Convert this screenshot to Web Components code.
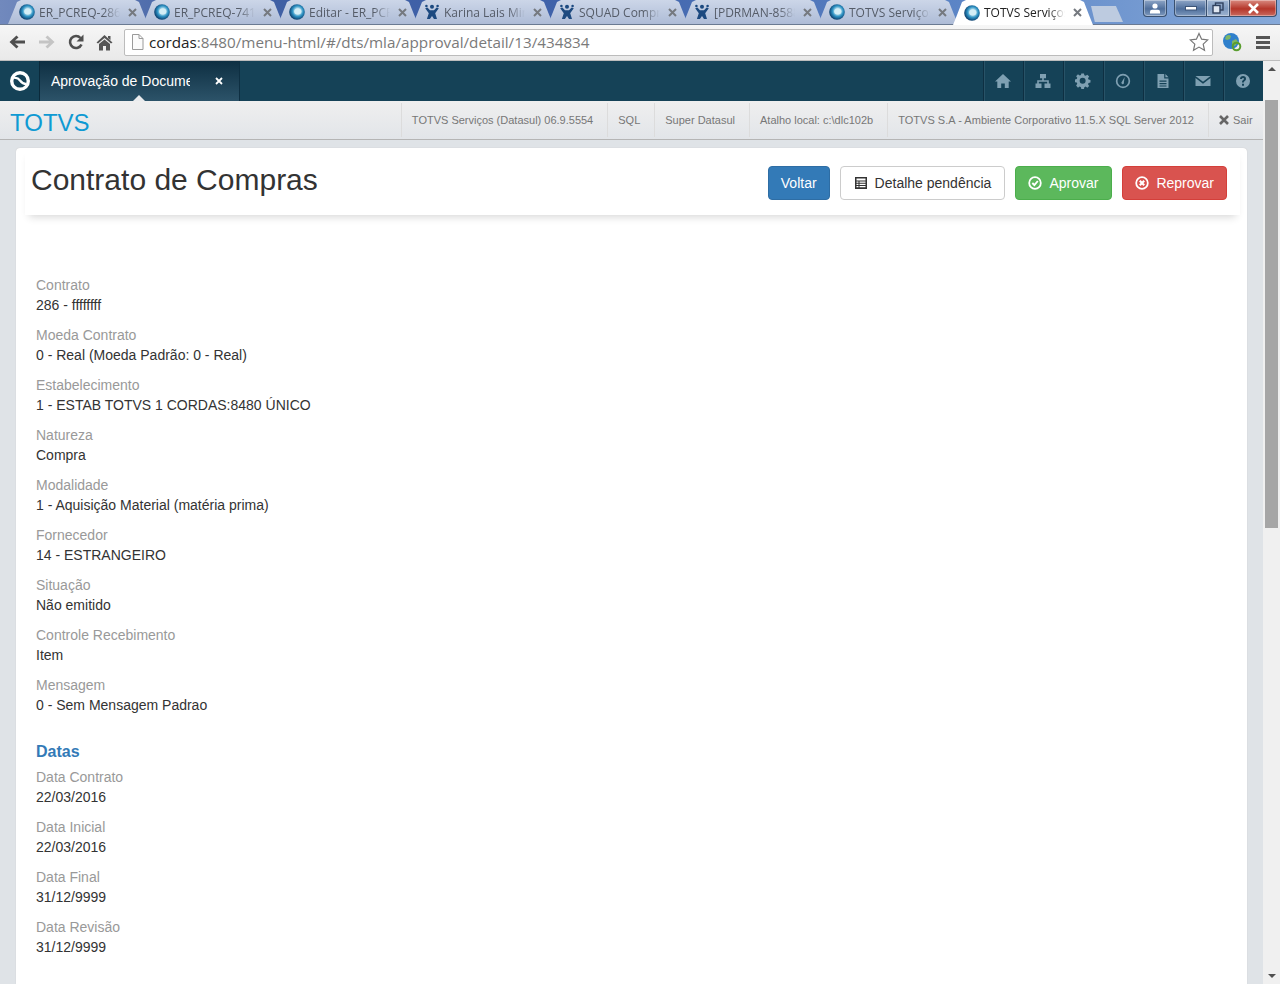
<!DOCTYPE html>
<html lang="pt-BR">
<head>
<meta charset="utf-8">
<title>TOTVS Serviços</title>
<style>
  html, body { margin: 0; height: 984px; overflow: hidden; background: #dfe3e7; }
  body { display: flex; flex-direction: column; font-family: "Liberation Sans", Arial, sans-serif; font-size: 14px; color: #333; }
  .view { display: flex; flex: 1; min-height: 0; }
  .main { flex: 1; min-width: 0; display: flex; flex-direction: column; }
</style>
</head>
<body>
<tab-strip>
  <chrome-tab icon="totvs">ER_PCREQ-286</chrome-tab>
  <chrome-tab icon="totvs">ER_PCREQ-741</chrome-tab>
  <chrome-tab icon="totvs">Editar - ER_PCREQ</chrome-tab>
  <chrome-tab icon="jira">Karina Lais Mira</chrome-tab>
  <chrome-tab icon="jira">SQUAD Compras</chrome-tab>
  <chrome-tab icon="jira">[PDRMAN-8588]</chrome-tab>
  <chrome-tab icon="totvs">TOTVS Serviços</chrome-tab>
  <chrome-tab icon="totvs" active>TOTVS Serviços</chrome-tab>
</tab-strip>
<browser-toolbar host="cordas" rest=":8480/menu-html/#/dts/mla/approval/detail/13/434834"></browser-toolbar>
<div class="view">
  <div class="main">
    <app-nav title-text="Aprovação de Documentos"></app-nav>
    <info-bar>
      <info-item>TOTVS Serviços (Datasul) 06.9.5554</info-item>
      <info-item>SQL</info-item>
      <info-item>Super Datasul</info-item>
      <info-item>Atalho local: c:\dlc102b</info-item>
      <info-item wide>TOTVS S.A - Ambiente Corporativo 11.5.X SQL Server 2012</info-item>
    </info-bar>
    <page-card heading="Contrato de Compras">
      <action-button slot="actions" kind="primary">Voltar</action-button>
      <action-button slot="actions" icon="list">Detalhe pendência</action-button>
      <action-button slot="actions" kind="success" icon="check">Aprovar</action-button>
      <action-button slot="actions" kind="danger" icon="times">Reprovar</action-button>

      <field-item label="Contrato">286 - ffffffff</field-item>
      <field-item label="Moeda Contrato">0 - Real (Moeda Padrão: 0 - Real)</field-item>
      <field-item label="Estabelecimento">1 - ESTAB TOTVS 1 CORDAS:8480 ÚNICO</field-item>
      <field-item label="Natureza">Compra</field-item>
      <field-item label="Modalidade">1 - Aquisição Material (matéria prima)</field-item>
      <field-item label="Fornecedor">14 - ESTRANGEIRO</field-item>
      <field-item label="Situação">Não emitido</field-item>
      <field-item label="Controle Recebimento">Item</field-item>
      <field-item label="Mensagem">0 - Sem Mensagem Padrao</field-item>

      <section-title>Datas</section-title>
      <field-item label="Data Contrato">22/03/2016</field-item>
      <field-item label="Data Inicial">22/03/2016</field-item>
      <field-item label="Data Final">31/12/9999</field-item>
      <field-item label="Data Revisão">31/12/9999</field-item>
    </page-card>
  </div>
  <page-scrollbar></page-scrollbar>
</div>

<script>
const TOTVS_ICON = `
  <svg width="16" height="16" viewBox="0 0 16 16">
    <defs>
      <radialGradient id="g" cx="55%" cy="45%" r="55%">
        <stop offset="30%" stop-color="#bfe4f0"/><stop offset="62%" stop-color="#2f93c4"/><stop offset="100%" stop-color="#0b3f6e"/>
      </radialGradient>
    </defs>
    <circle cx="8" cy="8" r="7.8" fill="url(#g)"/>
    <ellipse cx="8.8" cy="7.400" rx="3.600" ry="3" fill="#d4eef6"/>
  </svg>`;

const JIRA_ICON = `
  <svg width="16" height="16" viewBox="0 0 16 16" fill="#1d4a80">
    <circle cx="8" cy="2.800" r="2"/>
    <circle cx="2.400" cy="2" r="1.300"/>
    <circle cx="13.600" cy="2" r="1.300"/>
    <path d="M1.200 4.200 3.400 3.600 6 6.200h4l2.600-2.600 2.200.6-3.600 5 1.800 5.800h-3L8 12 5.900 15H2.900L4.800 9.200z"/>
  </svg>`;

class TabStrip extends HTMLElement {
  constructor() {
    super();
    this.attachShadow({mode: 'open'}).innerHTML = `
      <style>
        :host {
          display: flex; height: 25px; box-sizing: border-box; padding-left: 8px; flex: none;
          background: linear-gradient(90deg, #7189bd 0, #3f5fa3 18%, #3f62aa 45%, #5c85c6 75%, #86a9d9 100%);
          border-bottom: 1px solid #6a7a92; position: relative; z-index: 2;
        }
        .tabs { display: flex; }
        .new-tab {
          width: 32px; height: 16px; margin: 6px 0 0 3px; background: #bdcbe0; align-self: flex-start;
          clip-path: polygon(0 0, 78% 0, 100% 100%, 12% 100%);
        }
        .win { margin-left: auto; display: flex; align-items: flex-start; padding-right: 3px; }
        .btn {
          height: 17px; box-sizing: border-box; border: 1px solid #39506f; border-top: 0; border-radius: 0 0 4px 4px;
          display: flex; align-items: center; justify-content: center;
          background: linear-gradient(#8fa6c7, #4f6f9c 55%, #7d98bd); box-shadow: inset 0 0 0 1px rgba(255,255,255,.35);
        }
        .user { width: 24px; margin-right: 7px; }
        .group { display: flex; }
        .min { width: 32px; border-radius: 0 0 0 4px; border-right: 0; }
        .max { width: 23px; border-radius: 0; border-right: 0; background: linear-gradient(#a3b8d3, #7e9abf 55%, #9db3cf); }
        .close { width: 48px; border-radius: 0 0 4px 0; background: linear-gradient(#d98a80, #b5362a 55%, #c96a5f); }
      </style>
      <div class="tabs"><slot></slot></div>
      <div class="new-tab"></div>
      <div class="win">
        <div class="btn user">
          <svg width="12" height="11" viewBox="0 0 12 11" fill="#fff"><circle cx="6" cy="3" r="2.600"/><path d="M1 10.500V8.500Q1 7 3 6.800h6q2 .2 2 1.700v2z"/></svg>
        </div>
        <div class="group">
          <div class="btn min"><svg width="12" height="5" viewBox="0 0 12 5"><rect x=".5" y=".5" width="11" height="3.500" fill="#fff" stroke="#3d5578"/></svg></div>
          <div class="btn max"><svg width="12" height="12" viewBox="0 0 12 12" fill="none" stroke="#2f415e" stroke-width="1.400"><rect x="3.500" y="1" width="7.500" height="7"/><rect x="1" y="3.500" width="7" height="7.500" fill="#dfe7f1"/></svg></div>
          <div class="btn close"><svg width="13" height="11" viewBox="0 0 13 11" stroke="#fff" stroke-width="2.600"><path d="M2 1l9 9M11 1l-9 9"/></svg></div>
        </div>
      </div>`;
  }
}

class ChromeTab extends HTMLElement {
  connectedCallback() {
    const icon = this.getAttribute('icon') === 'jira' ? JIRA_ICON : TOTVS_ICON;
    this.attachShadow({mode: 'open'}).innerHTML = `
      <style>
        :host {
          display: flex; align-items: center; box-sizing: border-box; width: 141px; height: 24px; margin-right: -6px;
          padding: 0 11px 0 11px; font: 12px "Open Sans", "Liberation Sans", sans-serif; color: #555c68; position: relative;
          background: linear-gradient(#ccd6e8, #aebcd7);
          clip-path: polygon(0 100%, 4px 60%, 9px 8%, 13px 0, 127px 0, 131px 8%, 136px 60%, 140px 100%);
        }
        :host([active]) { background: #fff; color: #222; height: 25px; z-index: 1; }
        .icon { width: 16px; height: 16px; flex: none; margin-right: 4px; }
        .title {
          flex: 1; min-width: 0; white-space: nowrap; overflow: hidden;
          -webkit-mask-image: linear-gradient(90deg, #000 80%, transparent 100%);
        }
        .x { flex: none; margin: 0 1px 0 8px; }
      </style>
      <span class="icon">${icon}</span>
      <span class="title"><slot></slot></span>
      <svg class="x" width="9" height="9" viewBox="0 0 9 9" stroke="#75797f" stroke-width="2"><path d="M1 1l7 7M8 1l-7 7"/></svg>`;
  }
}

class BrowserToolbar extends HTMLElement {
  connectedCallback() {
    this.attachShadow({mode: 'open'}).innerHTML = `
      <style>
        :host {
          display: flex; align-items: center; height: 36px; flex: none; box-sizing: border-box; padding: 0 0 1px 7px;
          background: linear-gradient(#f6f6f6, #e9e9e9); border-bottom: 1px solid #bdbdbd;
        }
        svg { display: block; flex: none; }
        .nav { display: flex; align-items: center; gap: 10px; width: 117px; }
        .home { margin-left: 1px; }
        .omni {
          width: 1089px; height: 27px; box-sizing: border-box; background: #fff; border: 1px solid #bcbcbc; border-radius: 2px;
          display: flex; align-items: center; padding: 0 3px 0 6px;
          font: 15.25px "Open Sans", "Liberation Sans", sans-serif; color: #7a7a7a;
        }
        .omni b { font-weight: normal; color: #222; }
        .url { flex: 1; margin-left: 5px; white-space: nowrap; }
        .ext { margin-left: 9px; }
        .menu { margin-left: 14px; }
      </style>
      <div class="nav">
        <svg width="20" height="20" viewBox="0 0 20 20" fill="#4f4f4f"><path d="M2.500 10 9.500 3.500 11.500 5.500 8 8.500h10v3H8l3.500 3-2 2z"/></svg>
        <svg width="20" height="20" viewBox="0 0 20 20" fill="#c4c4c4"><path d="M17.500 10 10.500 3.500 8.500 5.500 12 8.500H2v3h10l-3.500 3 2 2z"/></svg>
        <svg width="18" height="18" viewBox="0 0 18 18" fill="none" stroke="#4f4f4f" stroke-width="2.600"><path d="M14.500 11.500A6 6 0 1 1 13.500 5"/><path d="M16.500 1.500v7h-7z" fill="#4f4f4f" stroke="none"/></svg>
        <svg class="home" width="17" height="17" viewBox="0 0 17 17" fill="#555"><path d="M8.500 1 16.500 8.500 15 9.500 8.500 4 2 9.500.500 8.500zM3 10l5.500-4.600L14 10v6.500h-4V12H7v4.500H3zM12 2h2.500v4L12 4z"/></svg>
      </div>
      <div class="omni">
        <svg width="13" height="16" viewBox="0 0 13 16" fill="#fbfbfb" stroke="#9a9a9a"><path d="M1.500.500h6.500l4 4v11h-10.500zM8 .500v4h4" /></svg>
        <span class="url"><b>${this.getAttribute('host')}</b>${this.getAttribute('rest')}</span>
        <svg width="20" height="20" viewBox="0 0 20 20" fill="#fff" stroke="#777" stroke-width="1.200"><path d="M10 1.500l2.600 5.700 6.200.700-4.600 4.200 1.300 6.100L10 15.100l-5.500 3.100 1.300-6.100L1.200 7.900l6.200-.7z"/></svg>
      </div>
      <svg class="ext" width="20" height="20" viewBox="0 0 20 20">
        <circle cx="9" cy="9" r="8" fill="#2f80cc"/>
        <path d="M4 4q3-2 5 0l-1 3-3 1-2-1zM10 9l4-2 2 3-3 4-3-1z" fill="#7db665"/>
        <circle cx="14.500" cy="14.500" r="3.800" fill="none" stroke="#5a9e2f" stroke-width="2"/>
      </svg>
      <svg class="menu" width="14" height="13" viewBox="0 0 14 13" fill="#555"><rect width="14" height="3"/><rect y="5" width="14" height="3"/><rect y="10" width="14" height="3"/></svg>`;
  }
}

class AppNav extends HTMLElement {
  connectedCallback() {
    const icons = [
      '<path d="M8 1 16 8.500h-2.300V15H9.800v-4.500H6.200V15H2.300V8.500H0z"/>',
      '<path d="M5 1h6v4.300H8.800v1.900h5V10.500h1.700V15h-6v-4.500h2.700V8.800H3.800v1.700h2.700V15h-6v-4.500h1.700V7.200h5V5.300H5z"/>',
      '<path fill-rule="evenodd" d="M6.500 0h3l.4 2.200 1.500.6 1.900-1.300 2.100 2.100-1.300 1.900.6 1.500 2.200.4v3l-2.200.4-.6 1.500 1.300 1.900-2.100 2.100-1.900-1.300-1.500.6-.4 2.200h-3l-.4-2.200-1.500-.6-1.900 1.300L.6 13.700l1.300-1.900-.6-1.500-2.200-.4v-3l2.200-.4.6-1.500L.6 3.100 2.700 1l1.900 1.300 1.500-.6zM8 5a3.400 3.400 0 1 0 0 6.800A3.400 3.400 0 0 0 8 5z" transform="translate(.6 .4) scale(.88)"/>',
      '<path fill-rule="evenodd" d="M8 .800a7.200 7.200 0 1 0 0 14.400A7.200 7.200 0 0 0 8 .800zm0 1.700a5.500 5.500 0 1 1 0 11 5.500 5.500 0 0 1 0-11z"/><path d="M9.700 3.900 8.900 9.300a1.300 1.300 0 1 1-2-.5z"/>',
      '<path fill-rule="evenodd" d="M2.500 1h6.700v4.500H13.500V15h-11zM4.500 7.500v1.200h7V7.500zm0 2.600v1.200h7v-1.200zm0 2.400v1h7v-1zM10.400 1l3.100 3.300h-3.100z"/>',
      '<path d="M.500 3h15L8 8.800zM.500 5.100V13h15V5.100L8 10.800z"/>',
      '<path fill-rule="evenodd" d="M8 1a7 7 0 1 0 0 14A7 7 0 0 0 8 1zM7 10.800h2v2H7zM5 6c0-1.900 1.300-3 3.100-3S11 4 11 5.700c0 1.400-.8 2-1.500 2.500-.5.4-.6.600-.6 1.300H7c0-1.300.3-1.900 1.100-2.500.6-.4.900-.7.900-1.200s-.3-.9-.9-.9c-.7 0-1 .4-1.100 1.100z"/>'
    ];
    this.attachShadow({mode: 'open'}).innerHTML = `
      <style>
        :host { display: flex; height: 40px; flex: none; background: #154257; }
        .logo { width: 40px; display: flex; align-items: center; justify-content: center; border-right: 1px solid #0b2a3b; box-sizing: border-box; }
        .tab {
          width: 200px; box-sizing: border-box; display: flex; align-items: center; padding-left: 11px; position: relative; color: #fff;
          background: linear-gradient(#0e2f42, #2c5369); border-right: 1px solid #0e2f42;
        }
        .tab span { width: 139px; overflow: hidden; white-space: nowrap; }
        .tab svg { margin-left: 25px; }
        .tab::after {
          content: ""; position: absolute; left: 93px; bottom: 0; border: 6px solid transparent; border-top: 0; border-bottom-color: #e9ebed;
        }
        .icons { margin-left: auto; display: flex; }
        .cell {
          width: 40px; box-sizing: border-box; display: flex; align-items: center; justify-content: center; padding-right: 1px;
          border-left: 1px solid #0e2f42; box-shadow: inset 1px 0 0 #285367;
        }
        .cell svg { fill: #7fa0b2; display: block; }
      </style>
      <div class="logo">
        <svg width="22" height="22" viewBox="0 0 22 22" fill="none" stroke="#fff"><circle cx="11" cy="11" r="8.300" stroke-width="3.400"/><path d="M5 8Q8.500 7 11 10.500T17.500 14" stroke-width="2.200"/></svg>
      </div>
      <div class="tab">
        <span>${this.getAttribute('title-text')}</span>
        <svg width="8" height="8" viewBox="0 0 8 8" stroke="#fff" stroke-width="1.800"><path d="M1 1l6 6M7 1l-6 6"/></svg>
      </div>
      <div class="icons">
        ${icons.map(p => `<div class="cell"><svg width="16" height="16" viewBox="0 0 16 16">${p}</svg></div>`).join('')}
      </div>`;
  }
}

class InfoBar extends HTMLElement {
  constructor() {
    super();
    this.attachShadow({mode: 'open'}).innerHTML = `
      <style>
        :host {
          display: flex; height: 39px; flex: none; box-sizing: border-box; padding: 2px 0 0 10px;
          background: linear-gradient(#efefef, #e2e5e9); border-bottom: 1px solid #b5b5b5;
        }
        .brand { font-size: 24px; line-height: 39px; color: #0f9ad3; }
        .items { margin-left: auto; display: flex; height: 34px; }
        .out {
          display: flex; align-items: center; gap: 4px; width: 55px; height: 34px; box-sizing: border-box; padding-left: 10px;
          border-left: 1px solid #dcdcdc; font-size: 11px; color: #777;
        }
      </style>
      <div class="brand">TOTVS</div>
      <div class="items"><slot></slot></div>
      <div class="out">
        <svg width="10" height="10" viewBox="0 0 10 10" stroke="#666" stroke-width="2.600"><path d="M1 1l8 8M9 1l-8 8"/></svg>Sair
      </div>`;
  }
}

class InfoItem extends HTMLElement {
  constructor() {
    super();
    this.attachShadow({mode: 'open'}).innerHTML = `
      <style>
        :host {
          display: flex; align-items: center; padding: 0 14px 0 10px; border-left: 1px solid #dcdcdc;
          font-size: 11px; color: #777; white-space: nowrap;
        }
        :host([wide]) { letter-spacing: .036px; }
      </style>
      <slot></slot>`;
  }
}

class PageCard extends HTMLElement {
  connectedCallback() {
    this.attachShadow({mode: 'open'}).innerHTML = `
      <style>
        :host {
          display: block; flex: 1; min-height: 0; margin: 8px 16px 0 16px; background: #fff;
          border-radius: 4px 4px 0 0; box-shadow: 0 0 1px #bbb; overflow: hidden;
        }
        header {
          display: flex; justify-content: space-between; height: 67px; box-sizing: border-box; padding: 18px 13px 0 6px;
          margin-left: 9px; margin-right: 7px;
          box-shadow: 0 6px 8px -4px rgba(0, 0, 0, .16);
        }
        h1 { margin: -4px 0 0; font-size: 30px; font-weight: normal; line-height: 35px; color: #333; }
        .actions { display: flex; gap: 10px; align-items: flex-start; }
        .body { padding: 60px 20px 0; }
      </style>
      <header>
        <h1>${this.getAttribute('heading')}</h1>
        <div class="actions"><slot name="actions"></slot></div>
      </header>
      <div class="body"><slot></slot></div>`;
  }
}

class ActionButton extends HTMLElement {
  connectedCallback() {
    const glyphs = {
      list: '<svg width="14" height="14" viewBox="0 0 14 14"><path fill-rule="evenodd" fill="#333" d="M1 1h12v12H1zM2.500 2.500v2h9v-2zm0 3v1.300h2V5.500zm3 0v1.300h6V5.500zm-3 2.300v1.300h2V7.800zm3 0v1.300h6V7.800zm-3 2.200v1.300h2V10zm3 0v1.300h6V10z"/></svg>',
      check: '<svg width="14" height="14" viewBox="0 0 14 14" fill="none" stroke="#fff"><circle cx="7" cy="7" r="5.800" stroke-width="1.800"/><path d="M4.300 7 6.400 9 9.800 5" stroke-width="1.900"/></svg>',
      times: '<svg width="14" height="14" viewBox="0 0 14 14" fill="none" stroke="#fff"><circle cx="7" cy="7" r="5.800" stroke-width="1.800"/><path d="M4.800 4.800l4.400 4.400M9.200 4.800 4.800 9.200" stroke-width="2.200"/></svg>'
    };
    const icon = glyphs[this.getAttribute('icon')] || '';
    this.attachShadow({mode: 'open'}).innerHTML = `
      <style>
        :host {
          display: flex; align-items: center; gap: 7px; height: 34px; box-sizing: border-box; padding: 0 13px;
          border: 1px solid #ccc; border-radius: 4px; background: #fff; color: #333; font-size: 14px; white-space: nowrap;
        }
        :host([kind="primary"]) { padding: 0 12px; background: #337ab7; border-color: #2e6da4; color: #fff; }
        :host([kind="success"]) { padding: 0 13px 0 12px; background: #5cb85c; border-color: #4cae4c; color: #fff; }
        :host([kind="danger"]) { padding: 0 12px; background: #d9534f; border-color: #d43f3a; color: #fff; }
        svg { display: block; }
      </style>
      ${icon}<slot></slot>`;
  }
}

class FieldItem extends HTMLElement {
  connectedCallback() {
    this.attachShadow({mode: 'open'}).innerHTML = `
      <style>
        :host { display: block; height: 50px; font-size: 14px; line-height: 20px; color: #333; }
        .label { color: #999; }
      </style>
      <div class="label">${this.getAttribute('label')}</div>
      <div><slot></slot></div>`;
  }
}

class SectionTitle extends HTMLElement {
  constructor() {
    super();
    this.attachShadow({mode: 'open'}).innerHTML = `
      <style>
        :host { display: block; margin-top: 17px; height: 25px; font-size: 16px; font-weight: bold; line-height: 20px; color: #337ab7; }
      </style>
      <slot></slot>`;
  }
}

class PageScrollbar extends HTMLElement {
  constructor() {
    super();
    this.attachShadow({mode: 'open'}).innerHTML = `
      <style>
        :host { display: flex; flex-direction: column; align-items: center; width: 17px; flex: none; background: #f0f0f0; }
        .up { margin-top: 6px; border: 4px solid transparent; border-top: 0; border-bottom: 4px solid #505050; }
        .thumb { width: 13px; height: 428px; margin-top: 29px; background: #a6a6a6; }
        .down { margin-top: auto; margin-bottom: 6px; border: 4px solid transparent; border-bottom: 0; border-top: 4px solid #505050; }
      </style>
      <div class="up"></div>
      <div class="thumb"></div>
      <div class="down"></div>`;
  }
}

customElements.define('tab-strip', TabStrip);
customElements.define('chrome-tab', ChromeTab);
customElements.define('browser-toolbar', BrowserToolbar);
customElements.define('app-nav', AppNav);
customElements.define('info-bar', InfoBar);
customElements.define('info-item', InfoItem);
customElements.define('page-card', PageCard);
customElements.define('action-button', ActionButton);
customElements.define('field-item', FieldItem);
customElements.define('section-title', SectionTitle);
customElements.define('page-scrollbar', PageScrollbar);
</script>
</body>
</html>
